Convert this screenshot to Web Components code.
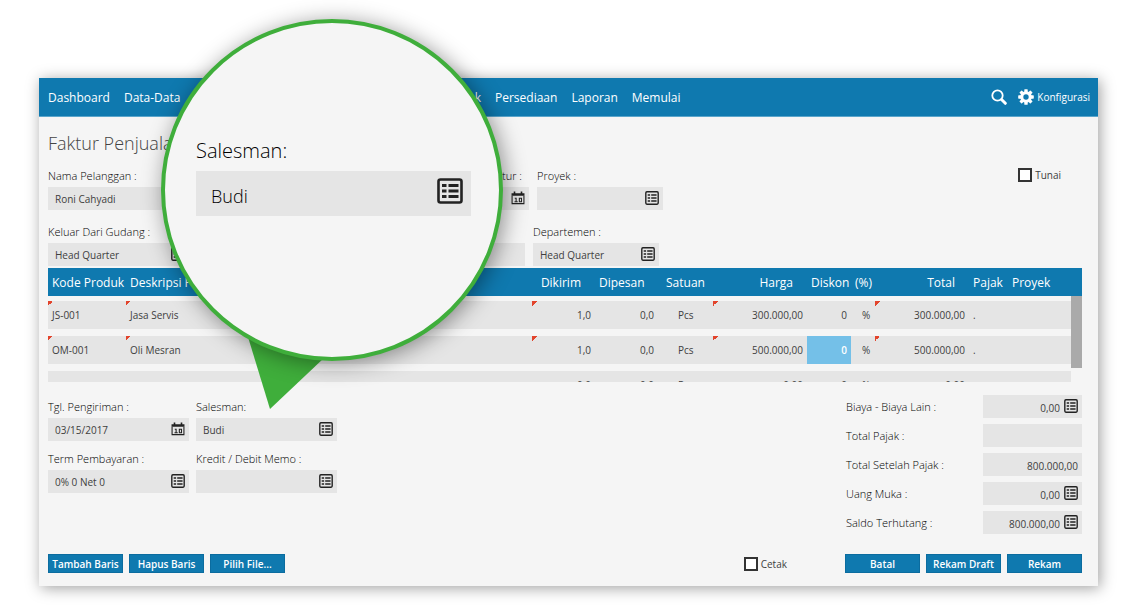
<!DOCTYPE html>
<html lang="id">
<head>
<meta charset="utf-8">
<title>Faktur Penjualan</title>
<style>
html{background:#fff}
body{margin:0;font-family:"Open Sans","Noto Sans",sans-serif;font-size:10px;color:#404040;
--blue:#0f79af;--paper:#f5f5f5;--box:#e5e5e5;--green:#3fae3b}
</style>
</head>
<body>
<invoice-page></invoice-page>
<script>
const define = (name, html, setup) => {
  const template = document.createElement('template');
  template.innerHTML = html;
  customElements.define(name, class extends HTMLElement {
    connectedCallback() {
      if (this.shadowRoot) return;
      const root = this.attachShadow({mode: 'open'});
      root.append(template.content.cloneNode(true));
      if (setup) setup(this, root);
    }
  });
};

const icons = {
  list: `<svg viewBox="0 0 26 26"><rect x="1.5" y="1.5" width="23" height="23" rx="2" fill="none" stroke="currentColor" stroke-width="2.6"/><path d="M5 7.5h4.5M5 13h4.5M5 18.5h4.5M11.5 7.5h10M11.5 13h10M11.5 18.5h10" fill="none" stroke="currentColor" stroke-width="2.8"/></svg>`,
  calendar: `<svg viewBox="0 0 26 26"><path d="M1 4h24v5H1zM5 1h3v4H5zM18 1h3v4h-3z" fill="currentColor"/><path d="M2 9v14.500h22V9" fill="none" stroke="currentColor" stroke-width="2"/><path d="M7 13.500h2.500V20M6.500 20h6M15.500 13.500h4V20h-4z" fill="none" stroke="currentColor" stroke-width="2"/></svg>`,
  search: `<svg viewBox="0 0 16 16"><circle cx="6.5" cy="6.5" r="5.200" fill="none" stroke="currentColor" stroke-width="1.8"/><path d="M10.8 10.8l3.500 3.500" stroke="currentColor" stroke-width="3" stroke-linecap="round"/></svg>`,
  gear: `<svg viewBox="0 0 16 16"><g fill="currentColor"><rect x="6.3" y="0.2" width="3.4" height="15.6" rx=".6"/><rect x="6.3" y="0.2" width="3.4" height="15.6" rx=".6" transform="rotate(45 8 8)"/><rect x="6.3" y="0.2" width="3.4" height="15.6" rx=".6" transform="rotate(90 8 8)"/><rect x="6.3" y="0.2" width="3.4" height="15.6" rx=".6" transform="rotate(135 8 8)"/><circle cx="8" cy="8" r="5.8"/></g><circle cx="8" cy="8" r="2.7" fill="#0f79af"/></svg>`
};

define('ui-icon', `<style>:host{display:block;width:14px;height:14px;flex:none}svg{display:block;width:100%;height:100%}</style>`,
  (el, root) => root.append(document.createRange().createContextualFragment(icons[el.getAttribute('name')])));

define('form-field', `
<style>
:host{display:flex;flex-direction:column;gap:3px;font-size:10px}
:host([row]){flex-direction:row;align-items:center;justify-content:space-between}
label{font-size:11px;line-height:16px;font-weight:300;color:#000;white-space:nowrap;min-height:16px}
:host([end]) label{text-align:right;padding-right:7px}
.box{display:flex;align-items:center;gap:4px;height:23px;box-sizing:border-box;background:var(--box);padding:0 4px 0 7px}
:host([row]) .box{width:99px}
input{flex:1;min-width:0;width:0;border:0;padding:0;margin:0;background:none;font:inherit;color:#404040;outline:0}
:host([row]) input{text-align:right;padding-top:2px}
button{all:unset;display:block;color:#222;cursor:pointer;padding-bottom:2px}
:host([large]){gap:8px}
:host([large]) label{font-size:20px;line-height:24px}
:host([large]) .box{height:45px;padding:0 8px 0 15px}
:host([large]) input{font-size:18px;font-weight:300;color:#000;padding-top:4px}
:host([large]) button{padding-bottom:5px}
:host([large]) ui-icon{width:26px;height:26px}
</style>
<label for="value"></label><div class="box"><input id="value" type="text"></div>`,
  (el, root) => {
    root.querySelector('label').textContent = el.getAttribute('label') || '';
    const input = root.querySelector('input');
    input.value = el.getAttribute('value') || '';
    if (!el.getAttribute('label')) input.setAttribute('aria-label', 'Gudang');
    if (el.getAttribute('icon')) {
      const button = document.createElement('button');
      button.type = 'button';
      button.setAttribute('aria-label', 'Pilih');
      const icon = document.createElement('ui-icon');
      icon.setAttribute('name', el.getAttribute('icon'));
      button.append(icon);
      root.querySelector('.box').append(button);
    }
  });

define('check-field', `
<style>
:host{display:block}
label{display:flex;align-items:center;gap:3px;font-size:10px;line-height:14px;color:#404040}
input{appearance:none;width:14px;height:14px;box-sizing:border-box;margin:0;border:2px solid #333;background:#fff}
</style>
<label><input type="checkbox"><slot></slot></label>`);

define('action-button', `
<style>
:host{display:block;width:75px}
button{display:block;width:100%;height:19px;padding:0;border:1px solid #0b6c9f;background:var(--blue);color:#fff;font:600 10px/16px "Open Sans","Noto Sans",sans-serif;white-space:nowrap}
</style>
<button type="button"><slot></slot></button>`);

define('nav-bar', `
<style>
:host{display:flex;justify-content:space-between;align-items:center;height:39px;box-sizing:border-box;padding:0 8px 0 9px;background:var(--blue);border-bottom:1px solid #5aa5cb;color:#fff;font-size:12px;font-weight:500}
nav,.first,.pair,.tools,.config{display:flex;align-items:center}
nav,.pair{gap:14px}
.first{width:433px;justify-content:space-between}
.tools{gap:11px}
.tools ui-icon{width:16px;height:16px}
.config{gap:3px;font-size:10px}
a{color:inherit;text-decoration:none}
</style>
<nav><div class="first"><div class="pair"><a href="#">Dashboard</a><a href="#">Data-Data</a></div><a href="#">Kas &amp; Bank</a></div>
<a href="#">Persediaan</a><a href="#">Laporan</a><a href="#">Memulai</a></nav>
<div class="tools"><a href="#" aria-label="Cari"><ui-icon name="search"></ui-icon></a><a class="config" href="#"><ui-icon name="gear"></ui-icon>Konfigurasi</a></div>`);

define('item-grid', `
<style>
:host{display:block;position:relative;height:114px;overflow:hidden}
table{width:100%;table-layout:fixed;border-collapse:separate;border-spacing:0}
th{height:28px;padding:0 4px;background:var(--blue);color:#fff;font-size:12px;font-weight:500;text-align:left;white-space:nowrap}
td{height:35px;padding:0 4px;box-sizing:border-box;border-top:7px solid var(--paper);background-color:var(--box);white-space:nowrap}
tr:first-child td{height:33px;border-top-width:5px}
.num{text-align:right}
th.num{padding-right:14px}
th.unit{padding-left:8px}
td.unit{padding-left:20px}
td.pct{padding-left:11px}
.mark{background-image:linear-gradient(135deg,#e2442c 50%,transparent 50%);background-size:5px 5px;background-repeat:no-repeat}
td.on{background-color:#74c0e8;color:#fff;font-weight:600}
td.track{background:var(--paper)}
.thumb{position:absolute;top:28px;right:0;width:11px;height:72px;background:#aaa}
</style>
<table>
<colgroup><col style="width:78px"><col><col style="width:63px"><col style="width:63px"><col style="width:55px"><col style="width:94px"><col style="width:44px"><col style="width:24px"><col style="width:94px"><col style="width:39px"><col style="width:63px"><col style="width:11px"></colgroup>
<thead><tr><th>Kode Produk</th><th>Deskripsi Produk</th><th class="num">Dikirim</th><th class="num">Dipesan</th><th class="unit">Satuan</th><th class="num">Harga</th><th>Diskon</th><th>(%)</th><th class="num">Total</th><th>Pajak</th><th>Proyek</th><th></th></tr></thead>
<tbody>
<tr><td class="mark">JS-001</td><td class="mark">Jasa Servis</td><td class="num mark">1,0</td><td class="num">0,0</td><td class="unit">Pcs</td><td class="num mark">300.000,00</td><td class="num">0</td><td class="pct">%</td><td class="num mark">300.000,00</td><td>.</td><td></td><td class="track"></td></tr>
<tr><td class="mark">OM-001</td><td class="mark">Oli Mesran</td><td class="num mark">1,0</td><td class="num">0,0</td><td class="unit">Pcs</td><td class="num mark">500.000,00</td><td class="num on">0</td><td class="pct">%</td><td class="num mark">500.000,00</td><td>.</td><td></td><td class="track"></td></tr>
<tr><td></td><td></td><td class="num">0,0</td><td class="num">0,0</td><td class="unit">Pcs</td><td class="num">0,00</td><td class="num">0</td><td class="pct">%</td><td class="num">0,00</td><td></td><td></td><td class="track"></td></tr>
</tbody></table>
<div class="thumb"></div>`);

define('zoom-bubble', `
<style>
:host{display:block;width:342px;height:342px}
.circle{position:relative;box-sizing:border-box;height:100%;padding:116px 28px 0 31px;border:4px solid var(--green);border-radius:50%;background:var(--paper);box-shadow:3px 3px 22px rgba(0,0,0,.42)}
svg{position:absolute;left:87px;top:310px;width:80px;height:80px}
</style>
<svg viewBox="0 0 80 80"><path d="M0 8L22 80 76 29z" fill="#3fae3b"/></svg>
<div class="circle"><slot></slot></div>`);

define('invoice-page', `
<style>
:host{display:block;position:relative;padding:78px 38px 24px 39px}
main{display:block;background:var(--paper);box-shadow:2px 2px 14px rgba(0,0,0,.38)}
.content{padding:13px 16px 13px 9px}
h1{margin:0 0 12px;font-size:18px;line-height:26px;font-weight:300;color:#444}
.line{display:flex;gap:8px;margin-bottom:14px}
.line.second{margin-bottom:2px}
.group{display:flex;justify-content:space-between;width:481px}
.second .group{width:477px}
.w{width:141px}
.n{width:126px}
.line check-field{margin-left:auto;margin-right:21px}
.lower{display:flex;justify-content:space-between;margin-top:13px}
.fields{display:grid;grid-template-columns:141px 141px;gap:10px 7px;align-content:start;padding-top:4px}
.totals{display:flex;flex-direction:column;gap:6px;width:236px}
footer{display:flex;align-items:center;gap:6px;margin-top:20px}
footer check-field{margin-left:auto;margin-right:52px}
zoom-bubble{position:absolute;left:161px;top:19px}
</style>
<main>
<nav-bar></nav-bar>
<div class="content">
<h1>Faktur Penjualan</h1>
<div class="line"><div class="group"><form-field class="w" label="Nama Pelanggan :" value="Roni Cahyadi"></form-field><form-field class="w" end label="Tgl. Faktur :" icon="calendar"></form-field></div><form-field class="n" label="Proyek :" icon="list"></form-field><check-field>Tunai</check-field></div>
<div class="line second"><div class="group"><form-field class="w" label="Keluar Dari Gudang :" value="Head Quarter" icon="list"></form-field><form-field class="w"></form-field></div><form-field class="n" label="Departemen :" value="Head Quarter" icon="list"></form-field></div>
<item-grid></item-grid>
<div class="lower">
<div class="fields"><form-field label="Tgl. Pengiriman :" value="03/15/2017" icon="calendar"></form-field><form-field label="Salesman:" value="Budi" icon="list"></form-field><form-field label="Term Pembayaran :" value="0% 0 Net 0" icon="list"></form-field><form-field label="Kredit / Debit Memo :" icon="list"></form-field></div>
<div class="totals"><form-field row label="Biaya - Biaya Lain :" value="0,00" icon="list"></form-field><form-field row label="Total Pajak :"></form-field><form-field row label="Total Setelah Pajak :" value="800.000,00"></form-field><form-field row label="Uang Muka :" value="0,00" icon="list"></form-field><form-field row label="Saldo Terhutang :" value="800.000,00" icon="list"></form-field></div>
</div>
<footer><action-button>Tambah Baris</action-button><action-button>Hapus Baris</action-button><action-button>Pilih File...</action-button><check-field>Cetak</check-field><action-button>Batal</action-button><action-button>Rekam Draft</action-button><action-button>Rekam</action-button></footer>
</div>
</main>
<zoom-bubble><form-field large label="Salesman:" value="Budi" icon="list"></form-field></zoom-bubble>`);
</script>
</body>
</html>
